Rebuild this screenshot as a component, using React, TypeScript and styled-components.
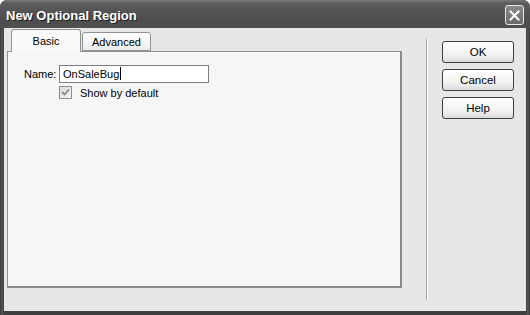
import React from "react"
import styled, { createGlobalStyle } from "styled-components"

const GlobalStyle = createGlobalStyle`
    html, body {
        margin: 0;
        padding: 0;
        background: #ffffff;
    }
    body {
        font-family: "Liberation Sans", Arial, sans-serif;
        font-size: 11px;
        color: #000000;
    }
`

const Window = styled.div({
    width: "530px",
    height: "315px",
    boxSizing: "border-box",
    display: "flex",
    flexDirection: "column",
    background: "linear-gradient(to right, #3a3a3a, #555555 2px, #3f3f3f 4px, #3f3f3f 526px, #5a5a5a 528px, #333333)",
    borderRadius: "7px 7px 0 0",
    overflow: "hidden"
})

const TitleBar = styled.div({
    height: "28px",
    flexShrink: 0,
    display: "flex",
    alignItems: "center",
    justifyContent: "space-between",
    padding: "0 5px 0 6px",
    background: "linear-gradient(to bottom, #7a7a7a 0px, #5e5e5e 3px, #555555 10px, #4d4d4d 22px, #525252 28px)"
})

const Title = styled.span({
    fontFamily: "\"Liberation Sans\", Arial, sans-serif",
    fontWeight: "bold",
    fontSize: "13px",
    color: "#ffffff",
    textShadow: "1px 1px 0 #1e1e1e",
    marginTop: "2px"
})

const CloseButton = styled.div({
    width: "19px",
    height: "20px",
    boxSizing: "border-box",
    border: "1px solid #e8e8e8",
    borderRadius: "3px",
    background: "linear-gradient(to bottom, #8a8a8a, #6a6a6a)",
    display: "flex",
    alignItems: "center",
    justifyContent: "center",
    marginTop: "2px",
    marginRight: "1px"
})

const Body = styled.div({
    flex: 1,
    margin: "0 4px 4px 4px",
    background: "#e7e7e6",
    display: "flex",
    alignItems: "flex-start"
})

const LeftColumn = styled.div({
    marginLeft: "3px",
    marginTop: "1px",
    width: "395px",
    display: "flex",
    flexDirection: "column"
})

const TabRow = styled.div({
    display: "flex",
    alignItems: "flex-end",
    height: "22px",
    paddingLeft: "4px",
    position: "relative",
    zIndex: 1
})

const Tab = styled.div<{ active?: boolean }>(({ active }) => ({
    boxSizing: "border-box",
    height: active ? "23px" : "19px",
    marginBottom: active ? "-1px" : "0",
    width: active ? "70px" : "69px",
    marginLeft: active ? "0" : "1px",
    border: "1px solid #919191",
    borderBottom: active ? "none" : "1px solid #919191",
    borderRadius: "3px 3px 0 0",
    background: active ? "#fafafa" : "linear-gradient(to bottom, #ffffff, #ececec)",
    display: "flex",
    justifyContent: "center",
    paddingTop: active ? "5px" : "3px",
    fontSize: "11px"
}))

const Panel = styled.div({
    boxSizing: "border-box",
    height: "237px",
    border: "1px solid #919191",
    borderRight: "2px solid #8a8a8a",
    borderBottom: "2px solid #8a8a8a",
    background: "#f6f6f6",
    padding: "13px 0 0 16px"
})

const FieldRow = styled.div({
    display: "flex",
    alignItems: "center",
    height: "17px"
})

const Label = styled.span({
    width: "35px"
})

const TextInput = styled.div({
    boxSizing: "border-box",
    width: "150px",
    height: "18px",
    border: "1px solid #7d7d7d",
    background: "#ffffff",
    display: "flex",
    alignItems: "center",
    paddingLeft: "3px",
    fontSize: "11px"
})

const Caret = styled.span({
    display: "inline-block",
    width: "1px",
    height: "13px",
    background: "#000000",
    marginLeft: "1px"
})

const CheckRow = styled.div({
    display: "flex",
    alignItems: "center",
    marginTop: "4px",
    marginLeft: "35px",
    gap: "8px",
    fontSize: "11px"
})

const CheckBox = styled.div({
    boxSizing: "border-box",
    width: "13px",
    height: "13px",
    border: "1px solid #8e8e8e",
    background: "linear-gradient(135deg, #dcdcdc, #f4f4f4)",
    display: "flex",
    alignItems: "center",
    justifyContent: "center"
})

const Separator = styled.div({
    width: "1px",
    height: "261px",
    marginTop: "11px",
    marginLeft: "24px",
    background: "#a5a5a5",
    borderRight: "1px solid #ffffff"
})

const ButtonColumn = styled.div({
    marginLeft: "14px",
    marginTop: "13px",
    display: "flex",
    flexDirection: "column",
    gap: "6px"
})

const Button = styled.div({
    boxSizing: "border-box",
    width: "72px",
    height: "22px",
    border: "1px solid #3d3d3d",
    borderRadius: "3px",
    background: "linear-gradient(to bottom, #ffffff, #f3f3f3 60%, #dcdcdc)",
    display: "flex",
    alignItems: "center",
    justifyContent: "center",
    fontSize: "11.5px"
})

const App: React.FC = () => {
    return (
        <>
            <GlobalStyle />
            <Window>
                <TitleBar>
                    <Title>New Optional Region</Title>
                    <CloseButton>
                        <svg width="11" height="11" viewBox="0 0 11 11">
                            <path d="M1.5 1.5 L9.5 9.5 M9.5 1.5 L1.5 9.5" stroke="#ffffff" strokeWidth="2" strokeLinecap="square" />
                        </svg>
                    </CloseButton>
                </TitleBar>
                <Body>
                    <LeftColumn>
                        <TabRow>
                            <Tab active>Basic</Tab>
                            <Tab>Advanced</Tab>
                        </TabRow>
                        <Panel>
                            <FieldRow>
                                <Label>Name:</Label>
                                <TextInput>OnSaleBug<Caret /></TextInput>
                            </FieldRow>
                            <CheckRow>
                                <CheckBox>
                                    <svg width="9" height="9" viewBox="0 0 9 9">
                                        <path d="M1 4 L3.5 6.5 L8 1.5" stroke="#8a8a8a" strokeWidth="1.8" fill="none" />
                                    </svg>
                                </CheckBox>
                                <span>Show by default</span>
                            </CheckRow>
                        </Panel>
                    </LeftColumn>
                    <Separator />
                    <ButtonColumn>
                        <Button>OK</Button>
                        <Button>Cancel</Button>
                        <Button>Help</Button>
                    </ButtonColumn>
                </Body>
            </Window>
        </>
    )
}

export default App
